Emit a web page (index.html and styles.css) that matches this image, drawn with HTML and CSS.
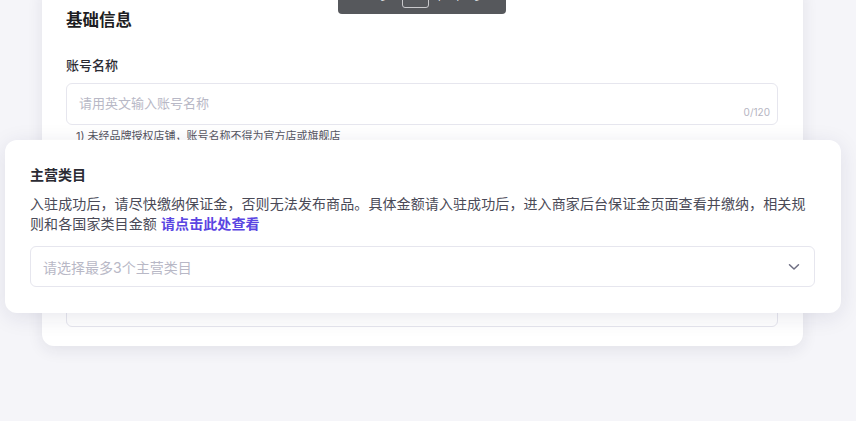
FILE: index.html
```html
<!DOCTYPE html>
<html lang="zh">
<head>
  <meta charset="UTF-8">
  <meta name="viewport" content="width=device-width, initial-scale=1.0">
  <title>基础信息</title>
  <link rel="stylesheet" href="styles.css">
</head>
<body>
  <div class="guide-bar">
    <span class="guide-txt">上一步</span>
    <span class="guide-page">2</span>
    <span class="guide-txt">/</span>
    <span class="guide-txt">下一步</span>
  </div>

  <div class="page">
    <div class="card">
      <div class="card-title">基础信息</div>

      <div class="field">
        <label class="field-label" for="accountName">账号名称</label>
        <div class="input-wrap">
          <input id="accountName" class="input" type="text" placeholder="请用英文输入账号名称">
          <span class="counter">0/120</span>
        </div>
        <div class="hint">1) 未经品牌授权店铺，账号名称不得为官方店或旗舰店</div>
      </div>

      <!-- this field is shown in the spotlight above, so its own text is hidden -->
      <div class="field field-category">
        <div class="field-label is-spotlit">主营类目</div>
        <div class="desc is-spotlit">入驻成功后，请尽快缴纳保证金，否则无法发布商品。</div>
        <div class="select"></div>
      </div>
    </div>
  </div>

  <!-- guide highlight over the category field -->
  <div class="spotlight">
    <div class="spot-title">主营类目</div>
    <div class="spot-desc">入驻成功后，请尽快缴纳保证金，否则无法发布商品。具体金额请入驻成功后，进入商家后台保证金页面查看并缴纳，相关规则和各国家类目金额 <a class="link" href="#">请点击此处查看</a></div>
    <div class="select">
      <span class="placeholder">请选择最多3个主营类目</span>
      <svg class="chevron" width="12" height="8" viewBox="0 0 12 8">
        <path d="M1.5 1.8 L6 6 L10.5 1.8" fill="none" stroke="#6e6e82" stroke-width="1.5" stroke-linecap="round" stroke-linejoin="round"/>
      </svg>
    </div>
  </div>
</body>
</html>
```

FILE: styles.css
```css
body {
  font-family: Inter, "Noto Sans CJK SC", sans-serif;
  background: #f5f5f9;
  margin: 0;
  height: 421px;
  overflow: hidden;
  position: relative;
}
.page {
  padding: 0 53px 0 42px;
}
.card {
  margin-top: -16px;
  background: #fff;
  border-radius: 12px;
  box-shadow: 0 4px 16px rgba(30, 30, 70, 0.09);
  padding: 24px 25px 19px 24px;
}
.card-title {
  font-size: 16.5px;
  line-height: 24px;
  font-weight: bold;
  color: #1d1d22;
}
.field {
  margin-top: 23px;
}
.field-label {
  display: block;
  font-size: 13px;
  line-height: 20px;
  font-weight: 500;
  color: #2b2b33;
}
.input-wrap {
  position: relative;
  margin-top: 8px;
}
.input {
  display: block;
  width: 100%;
  height: 42px;
  box-sizing: border-box;
  border: 1px solid #e6e6ee;
  border-radius: 6px;
  padding: 0 12px 2px;
  font-family: inherit;
  font-size: 13px;
  color: #2b2b33;
  outline: none;
}
.input::placeholder {
  color: #b8b8c6;
}
.counter {
  position: absolute;
  right: 8px;
  bottom: 7px;
  font-size: 10px;
  color: #b5b5c2;
}
.hint {
  margin-top: 3px;
  padding-left: 10px;
  font-size: 11px;
  line-height: 16px;
  color: #55555f;
}
.field-category {
  margin-top: 40px;
}
.desc {
  margin-top: 8px;
  font-size: 13px;
  line-height: 22px;
  height: 44px;
  color: #4a4a57;
}
.is-spotlit {
  visibility: hidden;
}
.field-category .select {
  margin-top: 30px;
}
.link {
  color: #5a45e2;
  font-weight: bold;
  text-decoration: none;
}
.select {
  height: 41px;
  box-sizing: border-box;
  border: 1px solid #e6e6ee;
  border-radius: 6px;
  padding: 0 14px 0 12px;
  display: flex;
  align-items: center;
  justify-content: space-between;
}
.placeholder {
  font-size: 14px;
  color: #b8b8c6;
}
.spotlight {
  position: absolute;
  left: 5px;
  top: 140px;
  width: 836px;
  height: 173px;
  box-sizing: border-box;
  padding: 25px 26px 0 25px;
  background: #fff;
  border-radius: 12px;
  box-shadow: 0 4px 22px rgba(30, 30, 80, 0.1);
}
.spot-title {
  font-size: 14px;
  line-height: 20px;
  font-weight: 600;
  color: #2b2b33;
}
.spot-desc {
  margin-top: 9px;
  font-size: 14px;
  line-height: 20px;
  letter-spacing: 0.1px;
  color: #4a4a57;
}
.spotlight .select {
  margin-top: 12px;
}
.chevron {
  display: block;
}
.guide-bar {
  position: absolute;
  left: 338px;
  top: 0;
  width: 168px;
  height: 14px;
  background: #56585c;
  border-radius: 0 0 4px 4px;
  display: flex;
  align-items: flex-end;
  justify-content: center;
  gap: 10px;
  overflow: hidden;
  z-index: 2;
}
.guide-txt {
  font-size: 11px;
  line-height: 11px;
  color: #e8e8ea;
  margin-bottom: 12px;
}
.guide-page {
  width: 27px;
  height: 20px;
  box-sizing: border-box;
  border: 1px solid #c9c9cc;
  border-radius: 3px;
  margin-bottom: 6px;
  font-size: 11px;
  color: transparent;
}
```
